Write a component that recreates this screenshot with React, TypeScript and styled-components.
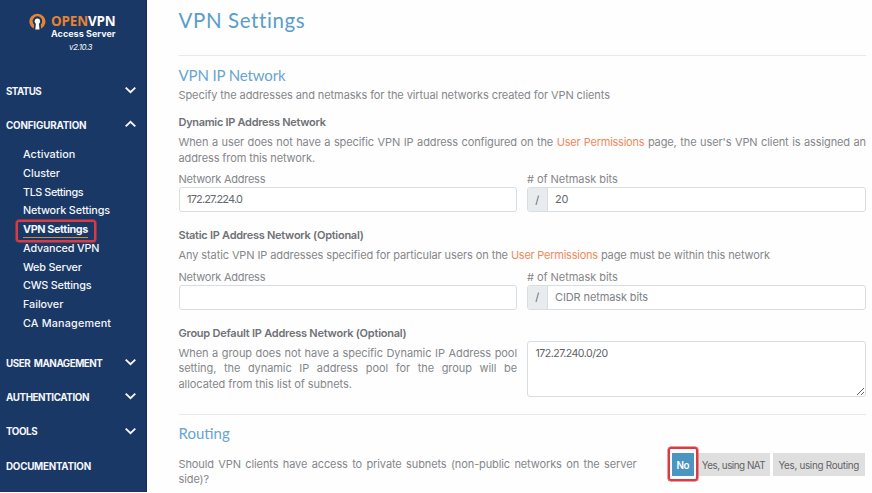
import React from "react";
import styled, { createGlobalStyle } from "styled-components";

const GlobalStyle = createGlobalStyle`
  *, *::before, *::after { box-sizing: border-box; }
  body {
    margin: 0;
    background: #fefefe;
    overflow: hidden;
    font-family: Inter, "Liberation Sans", sans-serif;
    font-size: 11px;
    color: #85878a;
  }
`;

const Page = styled.div`
  display: grid;
  grid-template-columns: 147px 1fr;
  width: 872px;
  height: 493px;
`;

/* Sidebar */

const Sidebar = styled.nav`
  height: 492px;
  background: #1a3866;
  color: #f4f6fa;
  border-right: 1px solid #122c58;
`;

const Brand = styled.header`
  height: 74px;
  padding: 13px 0 0 29px;
  display: flex;
  gap: 5px;
`;

const BrandText = styled.div`
  display: flex;
  flex-direction: column;
`;

const BrandName = styled.div`
  height: 16px;
  font: 700 13.4px/16px "Open Sans", sans-serif;
  letter-spacing: -0.12px;
  white-space: nowrap;
  color: #fff;
  span { color: #e8832f; }
`;

const BrandSub = styled.div`
  height: 9px;
  font-size: 9px;
  font-weight: 700;
  line-height: 9px;
  letter-spacing: 0.04px;
  white-space: nowrap;
`;

const Version = styled.div`
  font-size: 8px;
  font-style: italic;
  line-height: 18px;
  letter-spacing: -0.44px;
  padding-left: 18px;
`;

const SectionHead = styled.div<{ $ls: number }>`
  display: flex;
  align-items: center;
  justify-content: space-between;
  height: 34.3px;
  padding: 0 10px 0 6px;
  font-size: 9.8px;
  font-weight: 700;
  letter-spacing: ${(p) => p.$ls}px;
  white-space: pre;
  svg { margin-top: -2.5px; }
`;

const SubMenu = styled.ul`
  list-style: none;
  margin: 0;
  padding: 3.5px 0 12.5px 23px;
`;

const SubItem = styled.li<{ $ls: number; $active?: boolean }>`
  position: relative;
  height: 18.75px;
  line-height: 18.75px;
  font-size: 10.8px;
  font-weight: ${(p) => (p.$active ? 700 : 500)};
  letter-spacing: ${(p) => p.$ls}px;
  white-space: nowrap;
`;

const ActiveLabel = styled.span`
  display: inline-block;
  height: 17px;
  border-bottom: 1.5px solid #c98a45;
`;

const Highlight = styled.span<{ $inset: string }>`
  position: absolute;
  inset: ${(p) => p.$inset};
  border: 2px solid #dc3a43;
  box-shadow: 0 0 0 0.5px #dc3a43;
  border-radius: 3px;
  pointer-events: none;
`;

/* Content */

const Main = styled.main`
  padding: 0 6px 0 31.5px;
`;

const Title = styled.h1`
  margin: 0;
  height: 55px;
  font: 400 20.5px/41px Lato, sans-serif;
  letter-spacing: 0.61px;
  color: #5a9dca;
`;

const Heading = styled.h2<{ $ls: number; $up?: number }>`
  margin: 0;
  height: 31px;
  padding-top: ${(p) => 9 - (p.$up ?? 0)}px;
  border-top: 1px solid #e6e8ea;
  font: 400 15px/20px Lato, sans-serif;
  letter-spacing: ${(p) => p.$ls}px;
  color: #68a5cf;
`;

const Intro = styled.p`
  margin: 0;
  height: 26px;
  line-height: 18px;
  letter-spacing: -0.085px;
`;

const GroupTitle = styled.h3<{ $ls: number }>`
  margin: 0;
  height: 23px;
  font-size: 11px;
  font-weight: 600;
  line-height: 20px;
  letter-spacing: ${(p) => p.$ls}px;
  color: #707276;
`;

const Para = styled.p<{ $ls?: number }>`
  margin: 0;
  line-height: 15.6px;
  text-align: justify;
  letter-spacing: ${(p) => p.$ls ?? -0.11}px;
`;

const Link = styled.a`
  color: #ee8a5c;
  letter-spacing: -0.24px;
`;

const Columns = styled.div<{ $bottom: number }>`
  display: grid;
  grid-template-columns: 338.5px 338.5px;
  column-gap: 10px;
  margin-bottom: ${(p) => p.$bottom}px;
`;

const Label = styled.label<{ $ls: number }>`
  display: block;
  height: 15px;
  margin-top: 6px;
  line-height: 14px;
  letter-spacing: ${(p) => p.$ls}px;
`;

const InputGroup = styled.div`
  display: flex;
  height: 25px;
  border: 1px solid #d8dde1;
  border-radius: 3px;
  overflow: hidden;
  background: #fff;
`;

const Addon = styled.span`
  width: 19.5px;
  display: grid;
  place-items: center;
  background: #e9ecef;
  border-right: 1px solid #d8dde1;
  color: #65696e;
`;

const Input = styled.input<{ $ls: number }>`
  flex: 1;
  min-width: 0;
  border: 0;
  outline: 0;
  padding: 0 8px 1px 7.5px;
  background: transparent;
  font: 400 11px Inter, sans-serif;
  letter-spacing: ${(p) => p.$ls}px;
  color: #65696e;
  &::placeholder { color: #7d8287; opacity: 1; }
`;

const TextArea = styled.textarea`
  display: block;
  width: 100%;
  height: 56px;
  margin-top: 18px;
  padding: 4px 7.5px;
  border: 1px solid #d8dde1;
  border-radius: 3px;
  outline: 0;
  resize: vertical;
  background: #fff;
  font: 400 10.6px/15px Inter, sans-serif;
  letter-spacing: -0.53px;
  color: #5d6166;
`;

const GroupRow = styled.div`
  display: grid;
  grid-template-columns: 338.5px 338.5px;
  column-gap: 10px;
  height: 91px;
`;

const RoutingRow = styled.div`
  display: flex;
  justify-content: space-between;
  padding: 12px 1.5px 0 0;
`;

const Question = styled.div`
  width: 458px;
`;

const Choices = styled.div`
  display: flex;
  gap: 3.5px;
  margin-top: -4px;
  height: 23.5px;
`;

const Choice = styled.button<{ $w: number; $ls: number; $on?: boolean }>`
  position: relative;
  z-index: ${(p) => (p.$on ? 1 : 0)};
  width: ${(p) => p.$w}px;
  height: 23.5px;
  padding: 0;
  border: 0;
  background: ${(p) => (p.$on ? "#4996c3" : "#dfdfdf")};
  color: ${(p) => (p.$on ? "#fff" : "#626467")};
  font: ${(p) => (p.$on ? 600 : 400)} 9.9px Inter, sans-serif;
  letter-spacing: ${(p) => p.$ls}px;
  white-space: nowrap;
`;

const Chevron = ({ up }: { up?: boolean }) => (
  <svg width="11" height="8" viewBox="0 0 11 8" fill="none" stroke="#f4f6fa" strokeWidth="1.9">
    <path d={up ? "M0.7 6.4 5.5 1.9 10.3 6.4" : "M0.7 1.6 5.5 6.1 10.3 1.6"} />
  </svg>
);

const Logo = () => (
  <svg width="17" height="18" viewBox="0 0 17 18">
    <path
      d="M4.6 15.7A8 8 0 1 1 12.2 15.7L11.5 11.7A4.7 4.7 0 1 0 5.3 11.7Z"
      fill="#e8832f"
    />
    <path d="M5.3 11.7A4.7 4.7 0 1 1 11.5 11.7L12 16.6H4.8Z" fill="#1a3866" />
    <circle cx="8.4" cy="8.3" r="2.7" fill="#fff" />
    <path d="M7 9.6h2.8l.7 6.8H6.3z" fill="#fff" />
  </svg>
);

const items: { name: string; ls: number; active?: boolean }[] = [
  { name: "Activation", ls: 0.05 },
  { name: "Cluster", ls: 0 },
  { name: "TLS Settings", ls: -0.42 },
  { name: "Network Settings", ls: -0.13 },
  { name: "VPN Settings", ls: -0.37, active: true },
  { name: "Advanced VPN", ls: -0.14 },
  { name: "Web Server", ls: -0.17 },
  { name: "CWS Settings", ls: -0.2 },
  { name: "Failover", ls: -0.03 },
  { name: "CA Management", ls: 0.17 },
];

const Section = ({ name, ls, icon }: { name: string; ls: number; icon?: "up" | "down" }) => (
  <SectionHead $ls={ls}>
    {name}
    {icon && <Chevron up={icon === "up"} />}
  </SectionHead>
);

const AddressFields = ({ address, bits, bottom }: { address: string; bits: string; bottom: number }) => (
  <Columns $bottom={bottom}>
    <div>
      <Label $ls={-0.24}>Network Address</Label>
      <InputGroup>
        <Input $ls={-0.84} defaultValue={address} />
      </InputGroup>
    </div>
    <div>
      <Label $ls={-0.05}># of Netmask bits</Label>
      <InputGroup>
        <Addon>/</Addon>
        <Input $ls={-0.12} defaultValue={bits} placeholder="CIDR netmask bits" />
      </InputGroup>
    </div>
  </Columns>
);

export default function App() {
  return (
    <Page>
      <GlobalStyle />
      <Sidebar>
        <Brand>
          <Logo />
          <BrandText>
            <BrandName><span>OPEN</span>VPN</BrandName>
            <BrandSub>Access Server</BrandSub>
            <Version>v2.10.3</Version>
          </BrandText>
        </Brand>
        <Section name="STATUS" ls={-0.6} icon="down" />
        <Section name="CONFIGURATION" ls={-0.16} icon="up" />
        <SubMenu>
          {items.map((it) => (
            <SubItem key={it.name} $ls={it.ls} $active={it.active}>
              {it.active ? <ActiveLabel>{it.name}</ActiveLabel> : it.name}
              {it.active && <Highlight $inset="-1px 50px -2px -7.5px" />}
            </SubItem>
          ))}
        </SubMenu>
        <Section name="USER  MANAGEMENT" ls={-0.46} icon="down" />
        <Section name="AUTHENTICATION" ls={-0.4} icon="down" />
        <Section name="TOOLS" ls={-0.42} icon="down" />
        <Section name="DOCUMENTATION" ls={-0.24} />
      </Sidebar>
      <Main>
        <Title>VPN Settings</Title>
        <Heading $ls={-0.13}>VPN IP Network</Heading>
        <Intro>Specify the addresses and netmasks for the virtual networks created for VPN clients</Intro>

        <GroupTitle $ls={-0.3}>Dynamic IP Address Network</GroupTitle>
        <Para>
          When a user does not have a specific VPN IP address configured on the{" "}
          <Link>User Permissions</Link> page, the user's VPN client is assigned an address from this
          network.
        </Para>
        <AddressFields address="172.27.224.0" bits="20" bottom={13} />

        <GroupTitle $ls={-0.268}>Static IP Address Network (Optional)</GroupTitle>
        <Para $ls={-0.1}>
          Any static VPN IP addresses specified for particular users on the <Link>User Permissions</Link>{" "}
          page must be within this network
        </Para>
        <AddressFields address="" bits="" bottom={13} />

        <GroupRow>
          <div>
            <GroupTitle $ls={-0.233}>Group Default IP Address Network (Optional)</GroupTitle>
            <Para $ls={-0.06}>
              When a group does not have a specific Dynamic IP Address pool setting, the dynamic IP
              address pool for the group will be allocated from this list of subnets.
            </Para>
          </div>
          <div>
            <TextArea defaultValue="172.27.240.0/20" spellCheck={false} />
          </div>
        </GroupRow>

        <Heading $ls={0} $up={1}>Routing</Heading>
        <RoutingRow>
          <Question>
            <Para>
              Should VPN clients have access to private subnets (non-public networks on the server
              side)?
            </Para>
          </Question>
          <Choices>
            <Choice $w={22.5} $ls={-0.4} $on>
              No
              <Highlight $inset="-6px -3.5px -5px -3.5px" />
            </Choice>
            <Choice $w={72} $ls={-0.5}>Yes, using NAT</Choice>
            <Choice $w={91.5} $ls={-0.3}>Yes, using Routing</Choice>
          </Choices>
        </RoutingRow>
      </Main>
    </Page>
  );
}
